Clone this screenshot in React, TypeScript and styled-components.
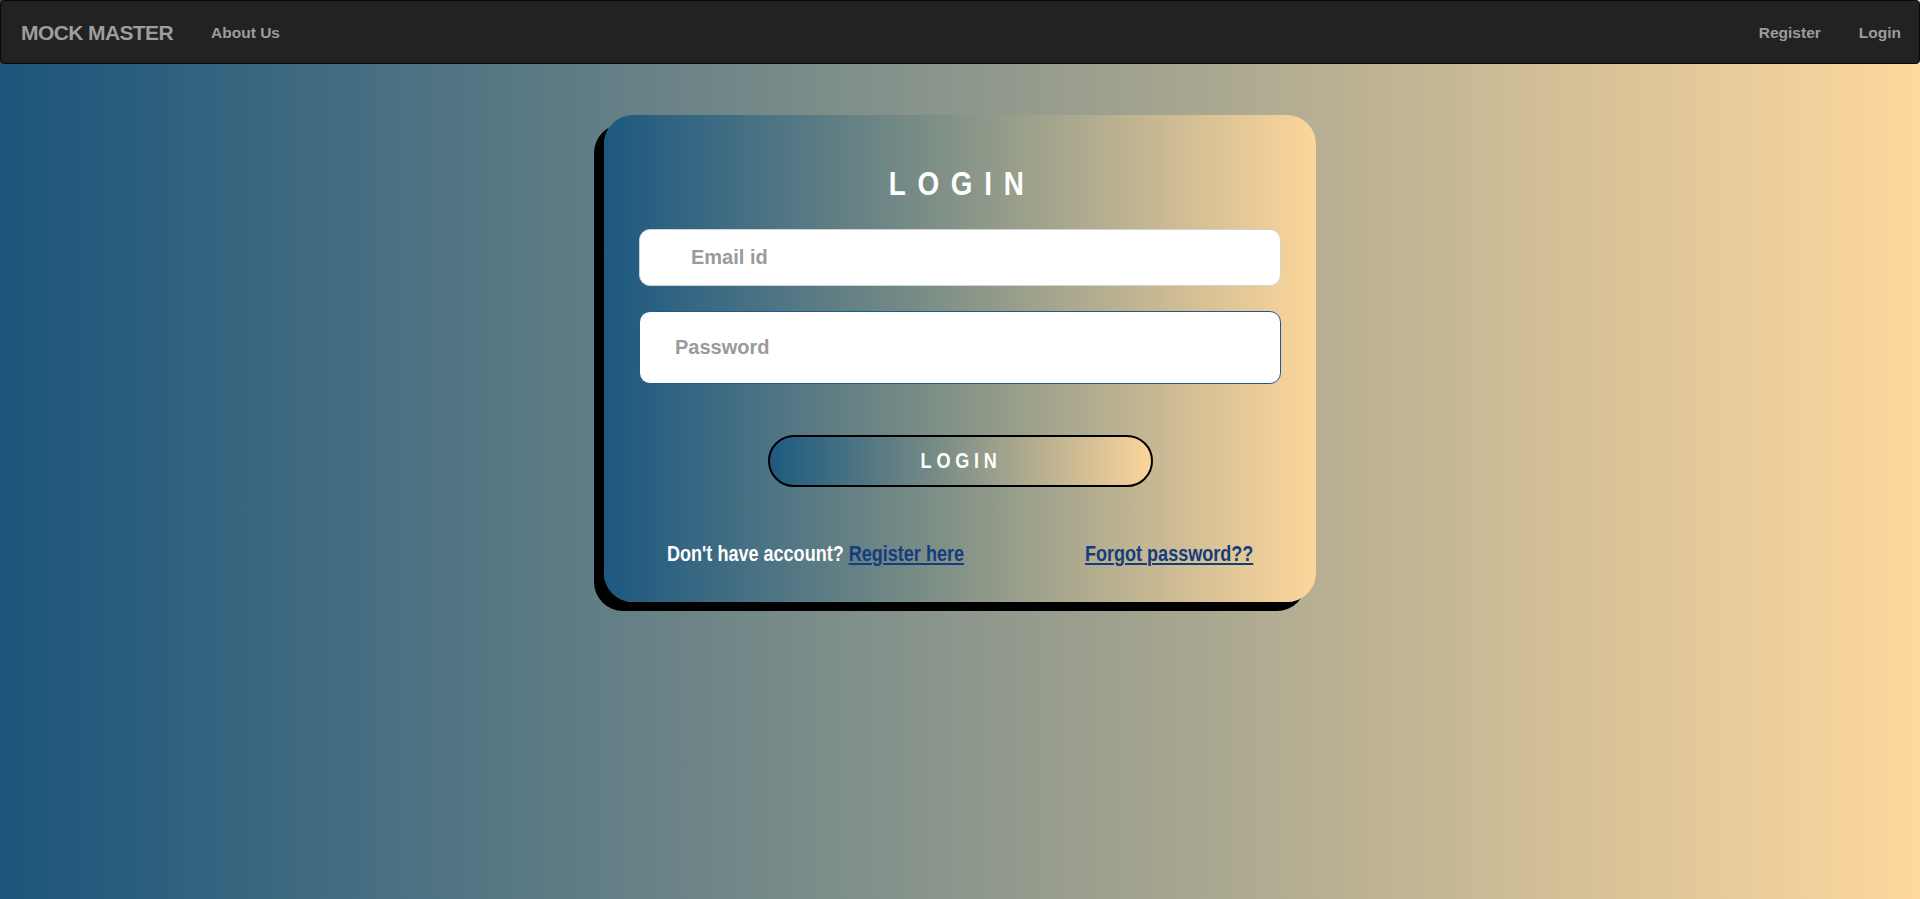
import React from "react";
import styled, { createGlobalStyle } from "styled-components";

const GlobalStyle = createGlobalStyle`
  html, body {
    margin: 0;
    padding: 0;
  }
  body {
    min-height: 100vh;
    background: linear-gradient(to right, #1b557b 0%, #fed89d 100%);
    font-family: "Liberation Sans", Arial, sans-serif;
  }
  * { box-sizing: border-box; }
`;

const Page = styled.div`
  min-height: 100vh;
  display: flex;
  flex-direction: column;
`;

const NavBar = styled.nav`
  height: 64px;
  background: #222222;
  border: 1px solid #080808;
  border-radius: 4px;
  display: flex;
  align-items: center;
  padding: 0 18px 0 20px;
`;

const Brand = styled.a`
  font-family: "Liberation Sans", Arial, sans-serif;
  font-weight: 700;
  font-size: 21px;
  letter-spacing: -0.6px;
  color: #9d9d9d;
  text-decoration: none;
  margin-right: 38px;
  padding-top: 1px;
`;

const NavGroup = styled.div<{ $right?: boolean }>`
  display: flex;
  align-items: center;
  gap: ${(p) => (p.$right ? "38px" : "0")};
  margin-left: ${(p) => (p.$right ? "auto" : "0")};
`;

const NavLink = styled.a`
  font-family: "Liberation Sans", Arial, sans-serif;
  font-weight: 700;
  font-size: 15.5px;
  color: #9d9d9d;
  text-decoration: none;
  padding-top: 1px;
`;

const Main = styled.main`
  display: flex;
  justify-content: center;
  padding-top: 51px;
`;

const Card = styled.form`
  width: 712px;
  height: 487px;
  border-radius: 29px;
  background: linear-gradient(to right, #1c5880 0%, #7a8d86 45%, #fdd69b 100%);
  box-shadow: -10px 9px 0 0 #000;
  padding: 48px 35px 0 35px;
  display: flex;
  flex-direction: column;
`;

const Squeeze = styled.span<{ $origin: string }>`
  display: inline-block;
  white-space: nowrap;
  transform: scaleX(0.82);
  transform-origin: ${(p) => p.$origin};
`;

const Title = styled.h1`
  margin: 0;
  height: 40px;
  line-height: 40px;
  text-align: center;
  font-family: "Liberation Sans", Arial, sans-serif;
  font-weight: 700;
  font-size: 34px;
  letter-spacing: 14.3px;
  color: #ffffff;
  ${Squeeze} {
    padding-left: 5px;
  }
`;

const Field = styled.input<{ $tall?: boolean; $indent: number; $focused?: boolean }>`
  width: 100%;
  height: ${(p) => (p.$tall ? "73px" : "57px")};
  margin-top: ${(p) => (p.$tall ? "25px" : "26px")};
  border-radius: 11px;
  border: 1px solid ${(p) => (p.$focused ? "#1d5b8c" : "#cfd3d8")};
  background: #ffffff;
  padding: 0 0 0 ${(p) => p.$indent}px;
  font-family: "Liberation Sans", Arial, sans-serif;
  font-weight: 700;
  font-size: 20px;
  color: #333;
  outline: none;
  &::placeholder {
    color: #9a9a9a;
    opacity: 1;
  }
`;

const ButtonRow = styled.div`
  display: flex;
  justify-content: center;
  margin-top: 51px;
`;

const LoginButton = styled.button`
  width: 385px;
  height: 52px;
  border-radius: 26px;
  border: 2px solid #000;
  background: linear-gradient(to right, #1d5a80 0%, #7a8d86 45%, #fcd59b 100%);
  color: #ffffff;
  font-family: "Liberation Sans", Arial, sans-serif;
  font-weight: 700;
  font-size: 22px;
  letter-spacing: 5.8px;
  padding: 0;
  cursor: pointer;
  ${Squeeze} {
    padding-left: 3px;
  }
`;

const Footer = styled.div`
  display: flex;
  justify-content: space-between;
  align-items: center;
  padding: 0 28px;
  margin-top: 54px;
  height: 26px;
  font-family: "Liberation Sans", Arial, sans-serif;
  font-weight: 700;
  font-size: 22px;
  line-height: 26px;
  color: #ffffff;
`;

const Link = styled.a`
  color: #153c7c;
  text-decoration: underline;
  text-decoration-thickness: 2px;
  text-underline-offset: 2px;
`;

export default function App() {
  return (
    <>
      <GlobalStyle />
      <Page>
        <NavBar>
          <Brand href="#">MOCK MASTER</Brand>
          <NavGroup>
            <NavLink href="#">About Us</NavLink>
          </NavGroup>
          <NavGroup $right>
            <NavLink href="#">Register</NavLink>
            <NavLink href="#">Login</NavLink>
          </NavGroup>
        </NavBar>
        <Main>
          <Card onSubmit={(e) => e.preventDefault()}>
            <Title>
              <Squeeze $origin="center">LOGIN</Squeeze>
            </Title>
            <Field type="email" placeholder="Email id" $indent={51} />
            <Field type="password" placeholder="Password" $indent={35} $tall $focused />
            <ButtonRow>
              <LoginButton type="submit">
                <Squeeze $origin="center">LOGIN</Squeeze>
              </LoginButton>
            </ButtonRow>
            <Footer>
              <Squeeze $origin="left center">
                Don't have account? <Link href="#">Register here</Link>
              </Squeeze>
              <Squeeze $origin="right center">
                <Link href="#">Forgot password??</Link>
              </Squeeze>
            </Footer>
          </Card>
        </Main>
      </Page>
    </>
  );
}
